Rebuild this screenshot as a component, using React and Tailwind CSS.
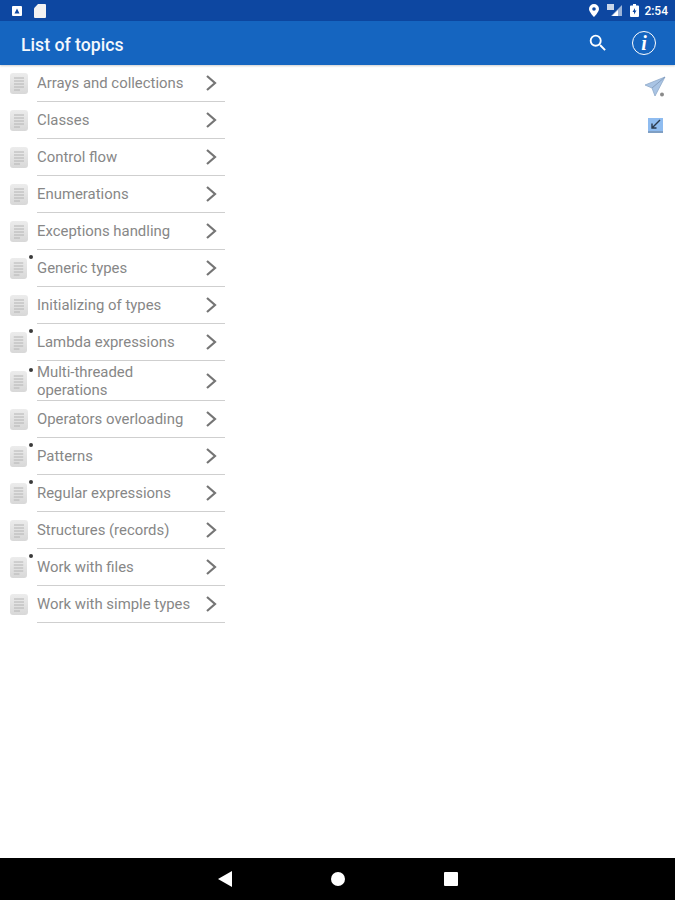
const topics = [
  { name: 'Arrays and collections' },
  { name: 'Classes' },
  { name: 'Control flow' },
  { name: 'Enumerations' },
  { name: 'Exceptions handling' },
  { name: 'Generic types', dot: true },
  { name: 'Initializing of types' },
  { name: 'Lambda expressions', dot: true },
  { name: 'Multi-threaded operations', dot: true, tall: true },
  { name: 'Operators overloading' },
  { name: 'Patterns', dot: true },
  { name: 'Regular expressions', dot: true },
  { name: 'Structures (records)' },
  { name: 'Work with files', dot: true },
  { name: 'Work with simple types' },
];

const DocIcon = ({ dot }) => (
  <div className="relative w-[28px] h-[21px] shrink-0">
    <svg width={dot ? 17 : 18} height="21" viewBox="0 0 18 21" preserveAspectRatio="none" className="absolute left-[10px] top-0">
      <defs>
        <linearGradient id="docFill" x1="0" y1="0" x2="0" y2="1">
          <stop offset="0" stopColor="#ececec" />
          <stop offset="1" stopColor="#d8d8d8" />
        </linearGradient>
      </defs>
      <rect x="0" y="0" width="18" height="21" rx="3" fill="url(#docFill)" />
      <path d="M4 5h10M4 8h10M4 11h10M4 14h10M4 17h6" stroke="#b4b4b4" strokeWidth="1" />
    </svg>
    {dot && <div className="absolute left-[29px] -top-[3px] w-[4px] h-[4px] rounded-full bg-[#3a3a3a]" />}
  </div>
);

const Chevron = () => (
  <svg width="12" height="18" viewBox="0 0 12 18" className="shrink-0">
    <path d="M2 2l8 7-8 7" fill="none" stroke="#757575" strokeWidth="2.2" />
  </svg>
);

const TopicRow = ({ topic }) => (
  <div className="flex items-center w-[225px]">
    <DocIcon dot={topic.dot} />
    <div className={`ml-[9px] flex-1 flex items-center border-b border-[#cfcfcf] ${topic.tall ? 'h-[40px]' : 'h-[37px]'}`}>
      <span className="w-[168px] text-[14.900px] leading-[18px] text-[#878787]">{topic.name}</span>
      <Chevron />
    </div>
  </div>
);

export default function App() {
  return (
    <div className="w-[675px] h-[900px] flex flex-col bg-white font-['Roboto',sans-serif]">
      {/* status bar */}
      <div className="h-[21px] bg-[#0d47a1] flex items-center justify-between pl-[12px] pr-[7px]">
        <div className="flex items-center gap-[12px]">
          <div className="w-[10px] h-[10px] rounded-[1px] bg-white flex items-center justify-center">
            <svg width="6" height="6" viewBox="0 0 6 6"><path d="M3 0.5L5.5 5.5H0.5Z" fill="#0d47a1" /></svg>
          </div>
          <svg width="12" height="14" viewBox="0 0 12 13" preserveAspectRatio="none"><path d="M4 0h7a1 1 0 0 1 1 1v11a1 1 0 0 1-1 1H1a1 1 0 0 1-1-1V4Z" fill="#f2f2f2" /></svg>
        </div>
        <div className="flex items-center">
          <svg width="10" height="13" viewBox="0 0 10 13"><path fillRule="evenodd" d="M5 0a5 5 0 0 1 5 5c0 3-5 8-5 8S0 8 0 5a5 5 0 0 1 5-5Zm0 3.2a1.8 1.8 0 1 0 0 3.6 1.8 1.8 0 0 0 0-3.6Z" fill="#fff" /></svg>
          <svg width="16" height="13" viewBox="0 0 16 13" className="ml-[8px]">
            <path d="M15 1v11H4Z" fill="#9db4d8" />
            <path d="M11 6v6H5Z" fill="#fff" />
            <rect x="0" y="0" width="7" height="6" fill="#c9d6ea" />
          </svg>
          <svg width="9" height="13" viewBox="0 0 9 13" className="ml-[7px]">
            <path fillRule="evenodd" d="M3 0h3v1.500h2a1 1 0 0 1 1 1V12a1 1 0 0 1-1 1H1a1 1 0 0 1-1-1V2.500a1 1 0 0 1 1-1h2ZM5 4 2.500 8H4v2.500L6.500 6.500H5Z" fill="#fff" />
          </svg>
          <span className="ml-[5px] text-[12px] leading-none font-medium text-white">2:54</span>
        </div>
      </div>

      {/* app bar */}
      <div className="h-[44px] bg-[#1565c0] flex items-center justify-between pl-[21px] pr-[19px] shadow-[0_1px_2px_rgba(0,0,0,0.2)]">
        <span className="pt-[4px] text-[17.700px] font-medium text-[#f4f8fc]">List of topics</span>
        <div className="flex items-center gap-[23px]">
          <svg width="22" height="22" viewBox="0 0 24 24">
            <path fill="#fff" d="M15.5 14h-.79l-.28-.27A6.471 6.471 0 0 0 16 9.5 6.5 6.5 0 1 0 9.5 16c1.610 0 3.090-.59 4.230-1.570l.27.28v.79l5 4.990L20.490 19l-4.990-5zm-6 0C7.010 14 5 11.990 5 9.500S7.010 5 9.500 5 14 7.010 14 9.500 11.990 14 9.500 14z" />
          </svg>
          <div className="w-[24px] h-[24px] rounded-full border-[1.500px] border-white flex items-center justify-center">
            <span className="font-['Liberation_Serif',serif] italic font-bold text-[20px] leading-none text-white">i</span>
          </div>
        </div>
      </div>

      {/* content */}
      <div className="flex-1 flex justify-between">
        <div className="flex flex-col">
          {topics.map((t) => <TopicRow key={t.name} topic={t} />)}
        </div>
        <div className="flex flex-col items-center pt-[11px] pr-[9px] gap-[20px]">
          <svg width="22" height="22" viewBox="0 0 22 22">
            <path d="M21 1L1 9l7 3 3 8Z" fill="#a9c4e4" stroke="#8fa9c9" strokeWidth="0.8" />
            <path d="M21 1L8 12" stroke="#7d97b8" strokeWidth="0.8" />
            <circle cx="18" cy="18.500" r="2" fill="#8a8a8a" />
          </svg>
          <div className="w-[15px] h-[15px] bg-[#8fbcf0] border-b-2 border-[#7f9fc4] flex items-center justify-center">
            <svg width="11" height="11" viewBox="0 0 11 11">
              <path d="M10 1L2 9M2 4.500V9h4.500" fill="none" stroke="#2b3a4d" strokeWidth="1.400" />
            </svg>
          </div>
        </div>
      </div>

      {/* nav bar */}
      <div className="h-[42px] bg-black flex items-center justify-center gap-[99px] pl-[1px]">
        <svg width="14" height="16" viewBox="0 0 14 16"><path d="M14 0v16L0 8Z" fill="#fff" /></svg>
        <div className="w-[14px] h-[14px] rounded-full bg-white" />
        <div className="w-[14px] h-[14px] rounded-[1px] bg-white" />
      </div>
    </div>
  );
}
